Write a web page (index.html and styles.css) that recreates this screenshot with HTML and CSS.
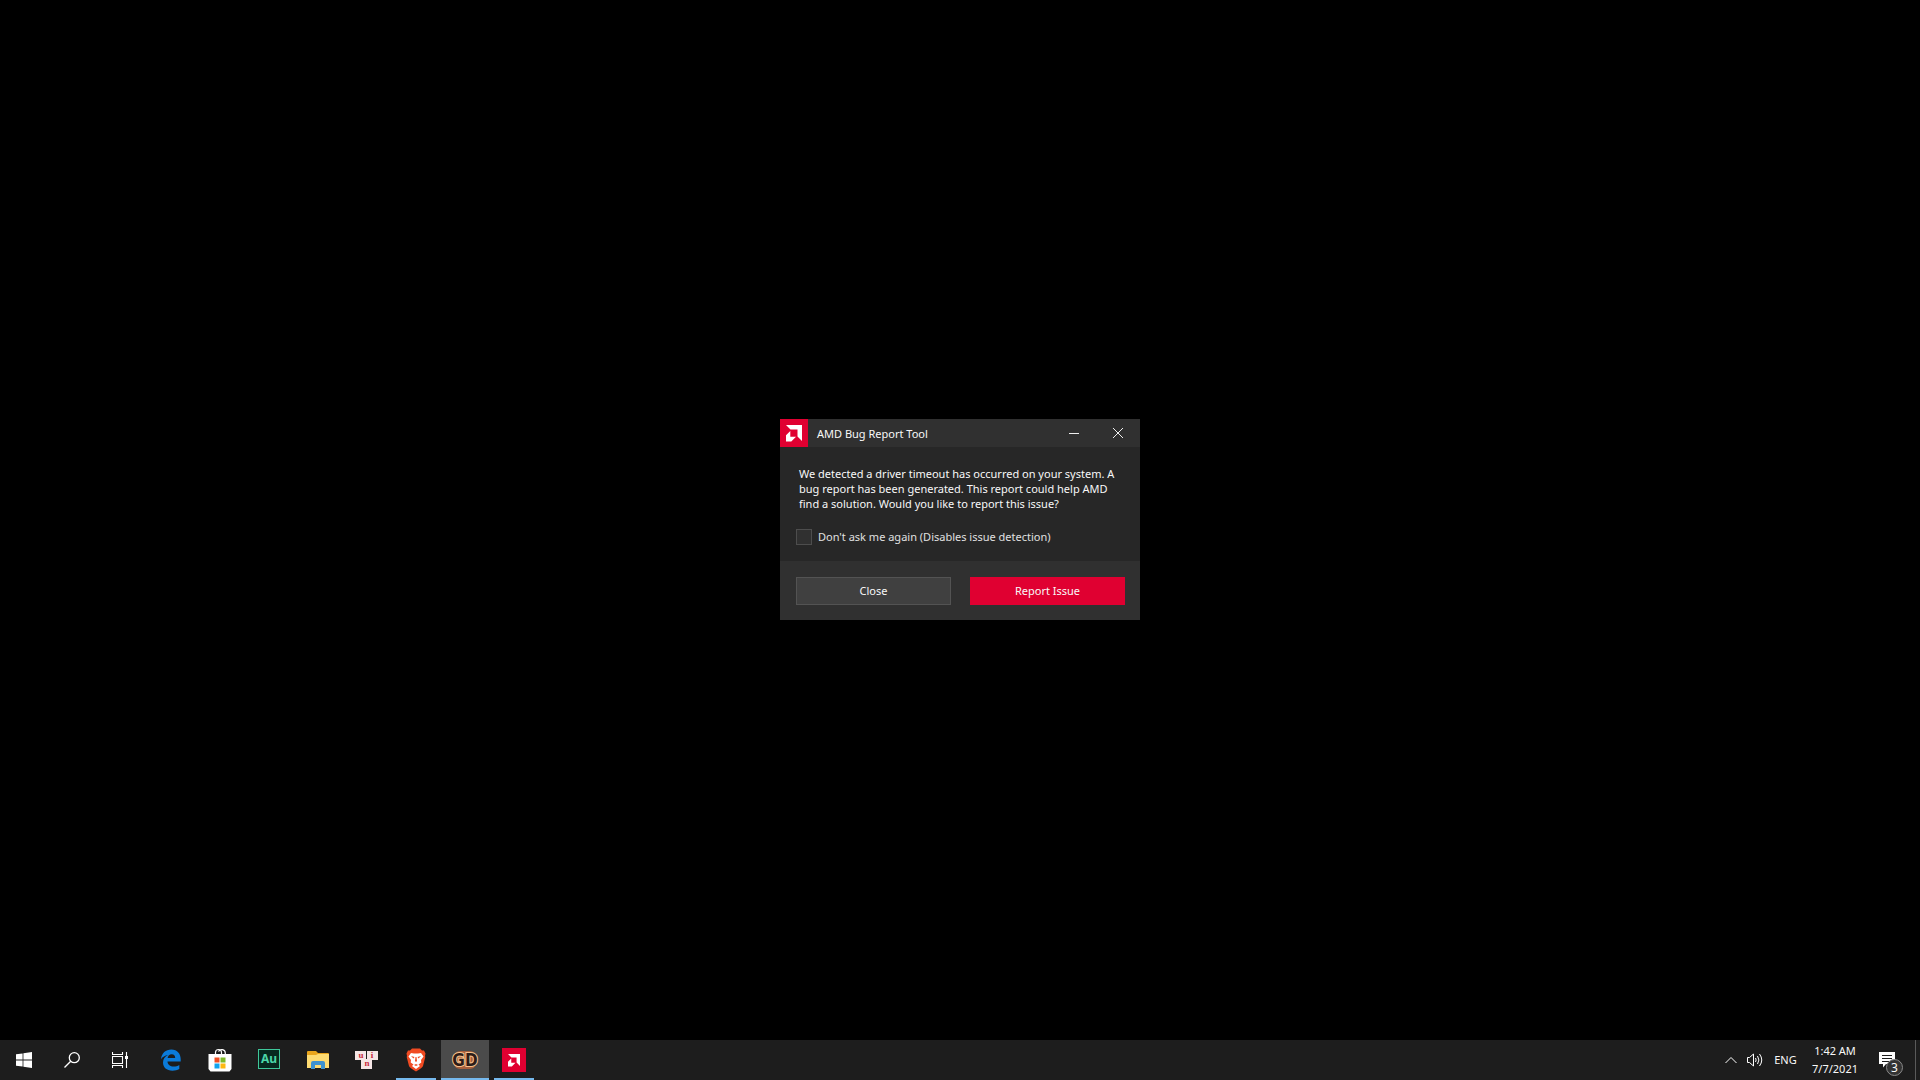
FILE: index.html
```html
<!DOCTYPE html>
<html lang="en">
<head>
  <meta charset="UTF-8" />
  <meta name="viewport" content="width=device-width, initial-scale=1.0"/>
  <title>AMD Bug Report Tool</title>
  <link rel="stylesheet" href="styles.css">
</head>
<body>

  <main class="desktop">
    <section class="dialog" role="dialog" aria-labelledby="dialog-title">
      <header class="title-bar">
        <svg class="amd-logo" viewBox="0 0 28 28" aria-hidden="true">
          <path d="M6 6H22V22L17.500 17.500V10.500H10.500Z"/>
          <path d="M10.300 12V17.700H16L11.300 22.500H6V16.300Z"/>
        </svg>
        <h1 id="dialog-title">AMD Bug Report Tool</h1>
        <button class="window-btn" type="button" aria-label="Minimize">
          <svg viewBox="0 0 12 12"><path d="M1 6.500H11"/></svg>
        </button>
        <button class="window-btn" type="button" aria-label="Close window">
          <svg viewBox="0 0 12 12"><path d="M1 1L11 11M11 1L1 11"/></svg>
        </button>
      </header>

      <div class="dialog-body">
        <p>We detected a driver timeout has occurred on your system. A<br>bug report has been generated. This report could help AMD<br>find a solution. Would you like to report this issue?</p>
        <div class="check-row">
          <input type="checkbox" id="dont-ask">
          <label for="dont-ask">Don't ask me again (Disables issue detection)</label>
        </div>
      </div>

      <footer class="dialog-footer">
        <button class="btn" type="button">Close</button>
        <button class="btn btn-primary" type="button">Report Issue</button>
      </footer>
    </section>
  </main>

  <nav class="taskbar" aria-label="Taskbar">
    <div class="system-buttons">
      <button class="task-btn" type="button" aria-label="Start">
        <svg width="16" height="16" viewBox="0 0 16 16" fill="#fff"><path d="M0 2.300L6.600 1.400V7.600H0ZM7.400 1.300L16 0V7.600H7.400ZM0 8.400H6.600V14.600L0 13.700ZM7.400 8.400H16V16L7.400 14.700Z"/></svg>
      </button>
      <button class="task-btn" type="button" aria-label="Search">
        <svg width="16" height="16" viewBox="0 0 16 16" fill="none" stroke="#fff" stroke-width="1.300"><circle cx="10.300" cy="5.700" r="5"/><path d="M6.700 9.300L0.500 15.500"/></svg>
      </button>
      <button class="task-btn" type="button" aria-label="Task View">
        <svg width="16" height="16" viewBox="0 0 16 16" fill="none" stroke="#fff" stroke-width="1.100"><path d="M0.500 0V2.500H10.500V0M0.500 4.500H10.500V11.500H0.500ZM0.500 16V13.500H10.500V16M14.500 0V16"/><path d="M13 4H16V7H13Z" fill="#fff" stroke="none"/></svg>
      </button>
    </div>

    <div class="apps">
      <button class="task-btn" type="button" aria-label="Microsoft Edge">
        <svg width="22" height="22" viewBox="0 0 22 22" fill="#0b7bd9"><path d="M1 10.200C1.500 4.200 5.800 0.500 11.300 0.500C17.500 0.500 20.700 5 20.700 10V12.500H7.500C7.700 16 10.300 17.500 13.500 17.500C15.700 17.500 17.700 16.900 19.300 15.900V20.100C17.400 21.200 15 21.700 12.500 21.700C6.600 21.700 3 18.300 3 13.500C3 10 5 7.500 8 6.100C4.900 6.500 2.600 8 1 10.200ZM7.600 9H15.200C15.200 6.700 14.100 5.200 11.700 5.200C9.400 5.200 8 6.800 7.600 9Z"/></svg>
      </button>
      <button class="task-btn" type="button" aria-label="Microsoft Store">
        <svg width="24" height="24" viewBox="0 0 24 24"><path d="M7.500 8V4.500C7.500 0.500 13.500 0.500 13.500 4.500V7M10.500 3.500C12 0.500 17.300 1.200 17.300 5V7" fill="none" stroke="#fff" stroke-width="1.200"/><path d="M0.500 6H23.500V21L21.500 23.500H2.500L0.500 21Z" fill="#fff"/><path d="M6.500 9.500H11.500V14.500H6.500Z" fill="#f04e23"/><path d="M12.500 9.500H17.500V14.500H12.500Z" fill="#7db928"/><path d="M6.500 15.500H11.500V20.500H6.500Z" fill="#12a4ee"/><path d="M12.500 15.500H17.500V20.500H12.500Z" fill="#fdb813"/></svg>
      </button>
      <button class="task-btn" type="button" aria-label="Adobe Audition">
        <span class="audition">Au</span>
      </button>
      <button class="task-btn" type="button" aria-label="File Explorer">
        <svg width="22" height="20" viewBox="0 0 22 20"><path d="M0 2Q0 1 1 1H9L11 3H21Q22 3 22 4V18H0Z" fill="#e9a51c"/><path d="M0 5H9L11 4H22V18H0Z" fill="#fddb72"/><path d="M4 19V13Q4 11 6 11H16Q18 11 18 13V19H14V15H8V19Z" fill="#3d92d0"/></svg>
      </button>
      <button class="task-btn" type="button" aria-label="UIN">
        <svg class="tiles" width="24" height="20" viewBox="0 0 24 20"><g fill="#f5e6e6"><rect x="0" y="1" width="11" height="9"/><rect x="12" y="1" width="11" height="9"/><rect x="6" y="9" width="11" height="10"/></g><g text-anchor="middle"><text x="6" y="8">u</text><text x="17" y="8">i</text><text x="12" y="16">n</text></g></svg>
      </button>
      <button class="task-btn running" type="button" aria-label="Brave">
        <svg width="20" height="24" viewBox="0 0 20 24"><path d="M6 0.500H14L16 2.500L18 2.500L19.500 5.500L19 8L19.300 9L17 18Q16.500 19.500 10 23.500Q3.500 19.500 3 18L0.700 9L1 8L0.500 5.500L2 2.500L4 2.500Z" fill="#f04b22"/><path d="M5 5L8 5.500H12L15 5L17.500 8.500L15 12L15.300 14.500L12.500 16.500L14 18L10 21L6 18L7.500 16.500L4.700 14.500L5 12L2.500 8.500Z" fill="#fff"/><path d="M5 8L8.500 9L7.500 10.500ZM15 8L11.500 9L12.500 10.500ZM9.500 9H10.500L11 13L10 14L9 13ZM8 17L10 16L12 17L10 18Z" fill="#f04b22"/></svg>
      </button>
      <button class="task-btn running active" type="button" aria-label="GD">
        <svg class="gd" width="28" height="26" viewBox="0 0 28 26"><rect x="3" y="4" width="22" height="18" rx="6"/><text x="14" y="19" text-anchor="middle">GD</text></svg>
      </button>
      <button class="task-btn running" type="button" aria-label="AMD Bug Report Tool">
        <svg class="amd-logo amd-small" viewBox="0 0 28 28">
          <path d="M7 7H21V21L17 17V11H11Z"/>
          <path d="M10.800 12.300V17.200H15.700L11.500 21.500H7V16Z"/>
        </svg>
      </button>
    </div>

    <div class="tray">
      <button class="tray-btn chevron" type="button" aria-label="Show hidden icons">
        <svg width="12" height="8" viewBox="0 0 12 8"><path d="M0.500 7L6 1.500L11.500 7"/></svg>
      </button>
      <button class="tray-btn volume" type="button" aria-label="Volume">
        <svg width="18" height="14" viewBox="0 0 18 14"><path d="M1.500 4.500H3.500L7.500 1V13L3.500 9.500H1.500ZM9.500 5Q10.800 7 9.500 9M11.500 3Q14.300 7 11.500 11M13.500 1Q18 7 13.500 13"/></svg>
      </button>
      <button class="tray-btn language" type="button">ENG</button>
      <button class="tray-btn clock" type="button"><span>1:42 AM</span><span>7/7/2021</span></button>
      <button class="tray-btn notifications" type="button" aria-label="3 notifications">
        <svg width="16" height="16" viewBox="0 0 16 16"><path d="M0 0H16V12H7L4 15.500V12H0Z" fill="#fff"/><path d="M3 3.500H13M3 6.500H13M3 9.500H10" stroke="#1d1d1d" fill="none"/></svg>
        <span class="badge">3</span>
      </button>
      <button class="show-desktop" type="button" aria-label="Show desktop"></button>
    </div>
  </nav>

</body>
</html>
```

FILE: styles.css
```css
:root {
  --red: #e00031;
  --bar: #1d1d1d;
  --panel: #303030;
  --panel-dark: #272727;
  --accent: #76b9ed;
}

* {
  box-sizing: border-box;
  margin: 0;
  padding: 0;
}

body {
  font-family: "Noto Sans", "Open Sans", sans-serif;
  font-size: 11px;
  background-color: #000;
  color: #f8f8f8;
  display: flex;
  flex-direction: column;
  min-height: 100vh;
}

button {
  font: inherit;
  color: inherit;
  background: none;
  border: none;
}

svg {
  display: block;
}

.desktop {
  flex: 1;
  display: flex;
  align-items: center;
  justify-content: center;
  padding-bottom: 1px;
}

/* Dialog */
.dialog {
  width: 360px;
  background-color: var(--panel-dark);
}

.title-bar {
  display: flex;
  align-items: center;
  height: 28px;
  padding-right: 4px;
  background-color: var(--panel);
}

.title-bar h1 {
  flex: 1;
  margin-left: 9px;
  font-size: 11px;
  font-weight: normal;
}

.amd-logo {
  width: 28px;
  height: 28px;
  background-color: var(--red);
  fill: #fff;
}

.window-btn {
  display: flex;
  align-items: center;
  justify-content: center;
  width: 36px;
  height: 28px;
  margin-left: 8px;
}

.window-btn svg {
  width: 12px;
  height: 12px;
  fill: none;
  stroke: #eee;
}

.dialog-body {
  padding: 19px 16px 16px;
}

.dialog-body p {
  padding-left: 3px;
  line-height: 15px;
  white-space: nowrap;
}

.check-row {
  display: flex;
  align-items: center;
  gap: 6px;
  margin-top: 18px;
  line-height: 16px;
  color: #e0e0e0;
}

.check-row input {
  appearance: none;
  width: 16px;
  height: 16px;
  background-color: #303030;
  border: 1px solid #4d4d4d;
}

.dialog-footer {
  display: flex;
  gap: 19px;
  padding: 16px 15px 15px 16px;
  background-color: var(--panel);
}

.btn {
  flex: 1;
  height: 28px;
  padding-bottom: 2px;
  background-color: #404040;
  border: 1px solid #535353;
}

.btn-primary {
  background-color: var(--red);
  border-color: var(--red);
}

/* Taskbar */
.taskbar {
  display: flex;
  height: 40px;
  background-color: var(--bar);
}

.system-buttons {
  display: flex;
  margin-right: 3px;
}

.apps {
  display: flex;
  gap: 1px;
}

.task-btn {
  position: relative;
  display: flex;
  align-items: center;
  justify-content: center;
  width: 48px;
  height: 40px;
}

.running::after {
  content: "";
  position: absolute;
  left: 4px;
  right: 4px;
  bottom: 0;
  height: 2px;
  background-color: var(--accent);
}

.active {
  background-color: #4b4b4b;
}

.active::after {
  left: 0;
  right: 0;
}

.audition {
  width: 22px;
  height: 20px;
  margin-bottom: 2px;
  border: 1px solid #3fc79a;
  background-color: #07291f;
  color: #4bd6a8;
  font-size: 12px;
  font-weight: bold;
  line-height: 18px;
}

.tiles text {
  font: bold 9px "Liberation Serif", serif;
  fill: #c8283c;
}

.gd rect {
  fill: #a8603c;
}

.gd text {
  font: bold 17px "DejaVu Sans Condensed", "Liberation Sans", sans-serif;
  fill: #2e1c18;
  stroke: #f6c08c;
  stroke-width: 2px;
  paint-order: stroke;
}

.amd-small {
  width: 24px;
  height: 24px;
}

.tray {
  display: flex;
  margin-left: auto;
}

.tray-btn {
  display: flex;
  align-items: center;
  justify-content: center;
  padding-bottom: 1px;
}

.chevron,
.volume {
  width: 24px;
}

.chevron svg,
.volume svg {
  fill: none;
  stroke: #fff;
}

.language {
  width: 37px;
  margin-right: 3px;
}

.clock {
  flex-direction: column;
  width: 56px;
  line-height: 18px;
}

.notifications {
  position: relative;
  width: 48px;
  margin-right: 4px;
}

.badge {
  position: absolute;
  left: 23px;
  top: 19px;
  width: 17px;
  height: 17px;
  border: 1px solid #8a8a8a;
  border-radius: 50%;
  background-color: #333;
  font-size: 12px;
  line-height: 15px;
}

.show-desktop {
  width: 5px;
  border-left: 1px solid #5a5a5a;
}
```
